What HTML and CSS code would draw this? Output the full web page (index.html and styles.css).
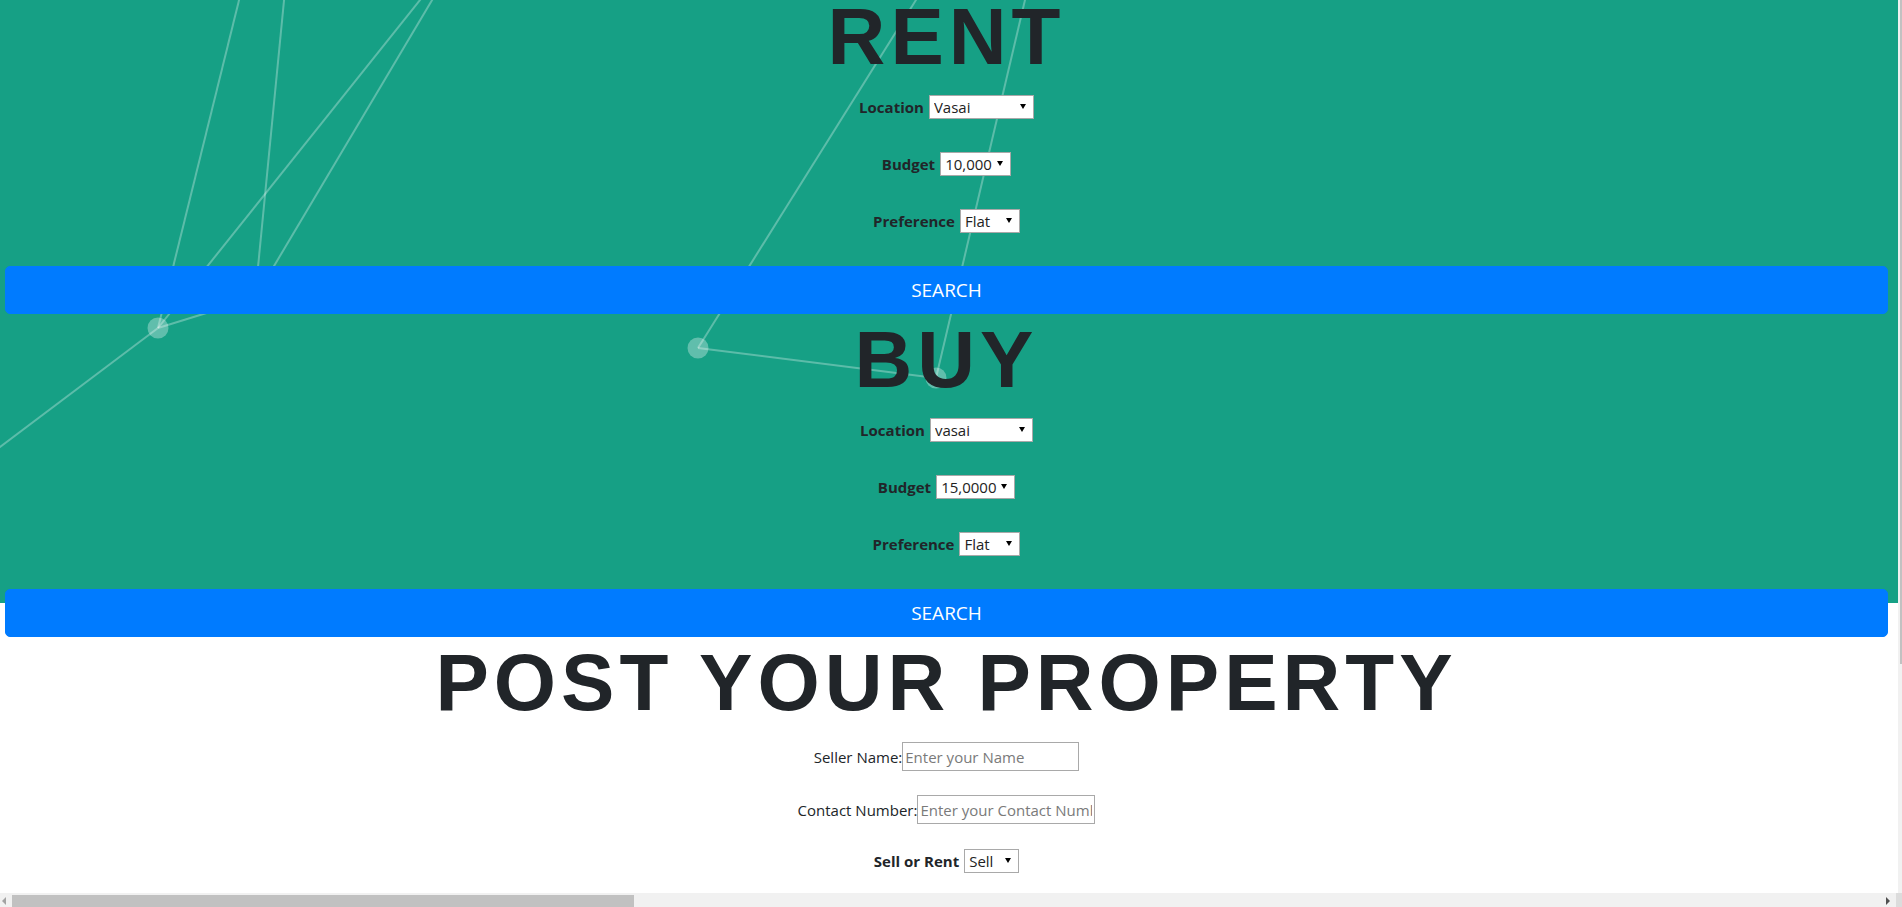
FILE: index.html
```html
<!DOCTYPE html>
<html lang="en">
<head>
<meta charset="utf-8">
<title>Rent / Buy / Post your property</title>
<link rel="stylesheet" href="styles.css">
</head>
<body>
<div class="screen">
  <div class="viewport">
    <div class="stage">
      <svg class="particles" viewBox="0 0 1898 603" preserveAspectRatio="none" aria-hidden="true">
        <rect x="0" y="0" width="1898" height="603" fill="#16a085"/>
        <g stroke="rgba(255,255,255,0.3)" stroke-width="2" fill="none">
          <line x1="158" y1="328" x2="244" y2="-20"/>
          <line x1="158" y1="328" x2="-50" y2="484.6"/>
          <line x1="158" y1="328" x2="436" y2="-20"/>
          <line x1="158" y1="328" x2="255" y2="298"/>
          <line x1="255" y1="298" x2="286" y2="-20"/>
          <line x1="255" y1="298" x2="444" y2="-20"/>
          <line x1="698" y1="348" x2="928.5" y2="-20"/>
          <line x1="698" y1="348" x2="936" y2="378"/>
          <line x1="936" y1="378" x2="1029.7" y2="-20"/>
        </g>
        <g fill="rgba(255,255,255,0.32)">
          <circle cx="158" cy="328" r="10.5"/>
          <circle cx="255" cy="298" r="10.5"/>
          <circle cx="698" cy="348" r="10.5"/>
          <circle cx="936" cy="378" r="10.5"/>
        </g>
      </svg>

      <form class="block">
        <h1 class="title">RENT</h1>
        <div class="fields">
          <div class="field">
            <label class="label-strong">Location</label>
            <span class="select w-105"><select><option>Vasai</option></select></span>
          </div>
          <div class="field">
            <label class="label-strong">Budget</label>
            <span class="select w-71"><select><option>10,000</option></select></span>
          </div>
          <div class="field">
            <label class="label-strong">Preference</label>
            <span class="select w-60"><select><option>Flat</option></select></span>
          </div>
        </div>
        <button class="btn-search" type="button">SEARCH</button>
      </form>

      <form class="block">
        <h1 class="title">BUY</h1>
        <div class="fields">
          <div class="field">
            <label class="label-strong">Location</label>
            <span class="select w-103"><select><option>vasai</option></select></span>
          </div>
          <div class="field">
            <label class="label-strong">Budget</label>
            <span class="select w-79"><select><option>15,0000</option></select></span>
          </div>
          <div class="field">
            <label class="label-strong">Preference</label>
            <span class="select w-61"><select><option>Flat</option></select></span>
          </div>
        </div>
        <button class="btn-search" type="button">SEARCH</button>
      </form>

      <form class="post">
        <h1 class="title">POST YOUR PROPERTY</h1>
        <div class="post-fields">
          <div class="post-row">
            <label>Seller Name:</label><input class="text-in w-177" type="text" placeholder="Enter your Name">
          </div>
          <div class="post-row">
            <label>Contact Number:</label><input class="text-in w-178" type="text" placeholder="Enter your Contact Number">
          </div>
          <div class="post-row short">
            <label class="label-strong">Sell or Rent</label>
            <span class="select w-55"><select><option>Sell</option></select></span>
          </div>
        </div>
      </form>
    </div>
  </div>
  <div class="vbar"><div class="vthumb"></div></div>
  <div class="hbar">
    <span class="harrow left"></span>
    <span class="hthumb"></span>
    <span class="hspace"></span>
    <span class="harrow right"></span>
    <span class="hcorner"></span>
  </div>
</div>
</body>
</html>
```

FILE: styles.css
```css
html, body {
  margin: 0;
  padding: 0;
  background: #fff;
}

body {
  font-family: "Open Sans", "Noto Sans", sans-serif;
  font-size: 15px;
  color: #212529;
}

.screen {
  display: grid;
  grid-template-columns: 1898px 4px;
  grid-template-rows: 893px 14px;
  width: 1902px;
  height: 907px;
  overflow: hidden;
}

.viewport {
  overflow: hidden;
  background: #fff;
}

.stage {
  position: relative;
}

.particles {
  position: absolute;
  top: 0;
  left: 0;
  width: 1898px;
  height: 603px;
  z-index: 0;
}

.block,
.post {
  position: relative;
  z-index: 1;
  display: flex;
  flex-direction: column;
  margin: 0;
  padding: 0 10px 9px 5px;
}

.title {
  margin: 0 0 21px;
  font-family: "Liberation Sans", Arial, sans-serif;
  font-weight: 700;
  font-size: 80px;
  line-height: 74px;
  letter-spacing: 5px;
  text-align: center;
  color: #212529;
}

.fields {
  display: flex;
  flex-direction: column;
  gap: 33px;
}

.field {
  display: flex;
  justify-content: center;
  align-items: center;
  gap: 5px;
  height: 24px;
}

.label-strong {
  font-weight: 700;
  color: #212529;
}

.select {
  position: relative;
  display: inline-block;
  box-sizing: border-box;
  height: 24px;
  border: 1px solid #a9a9a9;
  background: #fff;
}

.select select {
  -webkit-appearance: none;
  appearance: none;
  display: block;
  width: 100%;
  height: 22px;
  margin: 0;
  border: 0;
  padding: 0 0 0 4px;
  background: transparent;
  font-family: "Open Sans", "Noto Sans", sans-serif;
  font-size: 15px;
  line-height: 22px;
  color: #222;
  outline: none;
}

.select::after {
  content: "";
  position: absolute;
  right: 7px;
  top: 8px;
  border-left: 3px solid transparent;
  border-right: 3px solid transparent;
  border-top: 5px solid #000;
  pointer-events: none;
}

.w-55 { width: 55px; }
.w-60 { width: 60px; }
.w-61 { width: 61px; }
.w-71 { width: 71px; }
.w-79 { width: 79px; }
.w-103 { width: 103px; }
.w-105 { width: 105px; }
.w-177 { width: 177px; }
.w-178 { width: 178px; }

.btn-search {
  margin-top: 33px;
  height: 48px;
  border: 1px solid #007bff;
  border-radius: 5px;
  background: #007bff;
  color: #fff;
  font-family: "Open Sans", "Noto Sans", sans-serif;
  font-size: 19px;
  line-height: 30px;
  padding: 0 16px;
  cursor: pointer;
}

.post .title {
  margin-bottom: 22px;
}

.post-fields {
  display: flex;
  flex-direction: column;
  gap: 24px;
}

.post-row {
  display: flex;
  justify-content: center;
  align-items: center;
  height: 29px;
}

.post-row.short {
  height: 26px;
  gap: 5px;
}

.text-in {
  box-sizing: border-box;
  height: 29px;
  margin: 0;
  border: 1px solid #a9a9a9;
  padding: 0 2px;
  font-family: "Open Sans", "Noto Sans", sans-serif;
  font-size: 15px;
  color: #222;
  background: #fff;
  outline: none;
}

.text-in::placeholder {
  color: #7a7a7a;
}

/* fake scrollbars */
.vbar {
  background: #f1f1f1;
  display: flex;
  justify-content: flex-end;
}

.vthumb {
  width: 2px;
  height: 664px;
  background: #c1c1c1;
}

.hbar {
  grid-column: 1 / 3;
  display: flex;
  align-items: stretch;
  background: #f1f1f1;
}

.harrow {
  position: relative;
  width: 12px;
}

.harrow.left::before {
  content: "";
  position: absolute;
  left: 2px;
  top: 4px;
  border-top: 4px solid transparent;
  border-bottom: 4px solid transparent;
  border-right: 4px solid #a3a3a3;
}

.harrow.right {
  width: 14px;
  margin-left: auto;
}

.harrow.right::before {
  content: "";
  position: absolute;
  left: 4px;
  top: 4px;
  border-top: 4px solid transparent;
  border-bottom: 4px solid transparent;
  border-left: 4px solid #505050;
}

.hthumb {
  width: 622px;
  margin-top: 2px;
  background: #c1c1c1;
}

.hspace {
  flex: 1;
}

.hcorner {
  width: 6px;
  background: #dcdcdc;
}
```
